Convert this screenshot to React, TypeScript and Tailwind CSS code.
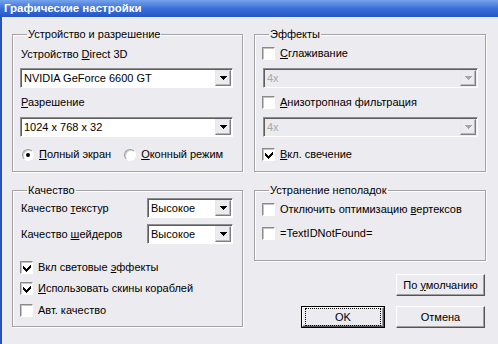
import type { ReactNode } from 'react';

const font = { fontFamily: '"Liberation Sans", Arial, sans-serif' };

const Check = ({ checked }: { checked?: boolean }) => (
  <span className="relative block h-[13px] w-[13px] shrink-0 border border-b-white border-l-[#8a8a8a] border-r-white border-t-[#8a8a8a] bg-white shadow-[inset_1px_1px_0_#c4c4c4]">
    {checked && (
      <svg width="11" height="11" viewBox="0 0 11 11" className="absolute left-0 top-0" shapeRendering="crispEdges">
        <path d="M2 4h1v1h1v1h1v1h1V6h1V5h1V4h1V3h1v3H9v1H8v1H7v1H6v1H5V9H4V8H3V7H2z" fill="#000" />
      </svg>
    )}
  </span>
);

const Radio = ({ checked }: { checked?: boolean }) => (
  <span className="flex h-[12px] w-[12px] shrink-0 items-center justify-center rounded-full border border-b-white border-l-[#9a9a9a] border-r-white border-t-[#9a9a9a] bg-white shadow-[inset_1px_1px_0_#d0d0d0]">
    {checked && <span className="block h-[4px] w-[4px] rounded-full bg-black" />}
  </span>
);

const Arrow = ({ disabled }: { disabled?: boolean }) => (
  <span className="flex h-[16px] w-[16px] shrink-0 items-center justify-center border border-b-[#7f7f7f] border-l-[#e8e8e8] border-r-[#7f7f7f] border-t-[#e8e8e8] bg-[#ecebef] shadow-[inset_-1px_-1px_0_#b8b8b8]">
    <svg width="7" height="4" viewBox="0 0 7 4" shapeRendering="crispEdges">
      <path d="M0 0h7v1H6v1H5v1H4v1H3V3H2V2H1V1H0z" fill={disabled ? '#a5a5a5' : '#000'} />
    </svg>
  </span>
);

const Combo = ({ value, disabled, className = '' }: { value: string; disabled?: boolean; className?: string }) => (
  <div
    className={`flex h-[20px] items-center border border-b-white border-l-[#8c8c8c] border-r-white border-t-[#8c8c8c] shadow-[inset_1px_1px_0_#5e5e5e] ${
      disabled ? 'bg-[#ecebef] text-[#a8a8a8]' : 'bg-white text-black'
    } ${className}`}
  >
    <span className="flex-1 pl-[3px] pt-px leading-[13px]">{value}</span>
    <span className="pr-px">
      <Arrow disabled={disabled} />
    </span>
  </div>
);

const Group = ({ title, className = '', children }: { title: string; className?: string; children: ReactNode }) => (
  <fieldset className={`border border-[#a3a3a3] shadow-[inset_1px_1px_0_#fff,1px_1px_0_#fff] ${className}`}>
    <legend className="ml-[7px] px-px leading-[13px]">{title}</legend>
    {children}
  </fieldset>
);

const CheckRow = ({ checked, children, className = '' }: { checked?: boolean; children: ReactNode; className?: string }) => (
  <div className={`flex items-center gap-[5px] leading-[13px] ${className}`}>
    <Check checked={checked} />
    <span>{children}</span>
  </div>
);

const Button = ({ children, def, className = '' }: { children: ReactNode; def?: boolean; className?: string }) => (
  <div className={`${def ? 'border border-black' : ''} ${className}`}>
    <div className="flex h-full items-center justify-center border border-b-[#555] border-l-white border-r-[#555] border-t-white bg-[#ecebef] shadow-[inset_-1px_-1px_0_#a0a0a0]">
      <div
        className={`flex h-full w-full items-center justify-center leading-[13px] ${
          def ? 'm-[2px] border border-dotted border-black' : ''
        }`}
      >
        <span>{children}</span>
      </div>
    </div>
  </div>
);

export default function App() {
  return (
    <div className="flex h-[344px] w-[498px] flex-col bg-[#ecebef] text-[11px] text-black" style={font}>
      <div className="flex h-[17px] items-center bg-gradient-to-b from-[#77a3ec] via-[#3a6fd8] to-[#2456c6] pl-[4px]">
        <span className="text-[11.5px] font-bold leading-none text-white">Графические настройки</span>
      </div>
      <div className="flex flex-1 border-l-2 border-[#2852c0] pl-[10px] pt-[11px]">
        <div className="flex w-[231px] flex-col">
          <Group title="Устройство и разрешение" className="h-[144px] pl-[7px] pr-[9px]">
            <div className="mt-[7px] pl-px leading-[13px]">
              Устройство <u>D</u>irect 3D
            </div>
            <Combo value="NVIDIA GeForce 6600 GT" className="mt-[7px]" />
            <div className="mt-[8px] pl-px leading-[13px]">
              <u>Р</u>азрешение
            </div>
            <Combo value="1024 x 768 x 32" className="mt-[8px]" />
            <div className="mt-[11px] flex items-center leading-[13px]">
              <span className="ml-[2px] flex items-center gap-[5px]">
                <Radio checked />
                <span>
                  <u>П</u>олный экран
                </span>
              </span>
              <span className="ml-[13px] flex items-center gap-[5px]">
                <Radio />
                <span>
                  <u>О</u>конный режим
                </span>
              </span>
            </div>
          </Group>
          <Group title="Качество" className="mt-[12px] h-[143px] pl-[7px] pr-[9px]">
            <div className="mt-[1px] flex items-center justify-between">
              <span className="pl-px leading-[13px]">
                Качество <u>т</u>екстур
              </span>
              <Combo value="Высокое" className="w-[86px]" />
            </div>
            <div className="mt-[6px] flex items-center justify-between">
              <span className="pl-px leading-[13px]">
                Качество <u>ш</u>ейдеров
              </span>
              <Combo value="Высокое" className="w-[86px]" />
            </div>
            <CheckRow checked className="mt-[17px]">
              Вкл световые <u>э</u>ффекты
            </CheckRow>
            <CheckRow checked className="mt-[8px]">
              <u>И</u>спользовать скины кораблей
            </CheckRow>
            <CheckRow className="mt-[9px]">Авт. качество</CheckRow>
          </Group>
        </div>
        <div className="ml-[11px] flex w-[232px] flex-col">
          <Group title="Эффекты" className="h-[144px] pl-[7px] pr-[7px]">
            <CheckRow className="mt-[6px]">
              <u>С</u>глаживание
            </CheckRow>
            <Combo value="4x" disabled className="ml-px mt-[8px]" />
            <CheckRow className="mt-[8px]">
              <u>А</u>низотропная фильтрация
            </CheckRow>
            <Combo value="4x" disabled className="ml-px mt-[8px]" />
            <CheckRow checked className="mt-[11px]">
              <u>В</u>кл. свечение
            </CheckRow>
          </Group>
          <Group title="Устранение неполадок" className="mt-[12px] h-[77px] pl-[7px] pr-[7px]">
            <CheckRow className="mt-[6px]">
              Отключить оптимизацию <u>в</u>ертексов
            </CheckRow>
            <CheckRow className="mt-[11px]">=TextIDNotFound=</CheckRow>
          </Group>
          <div className="mt-[13px] flex justify-end pr-[1px]">
            <Button className="h-[22px] w-[89px]">
              По <u>у</u>молчанию
            </Button>
          </div>
          <div className="mt-[10px] flex justify-end gap-[11px] pr-[1px]">
            <Button def className="h-[22px] w-[84px]">
              OK
            </Button>
            <Button className="h-[22px] w-[89px]">Отмена</Button>
          </div>
        </div>
      </div>
    </div>
  );
}
